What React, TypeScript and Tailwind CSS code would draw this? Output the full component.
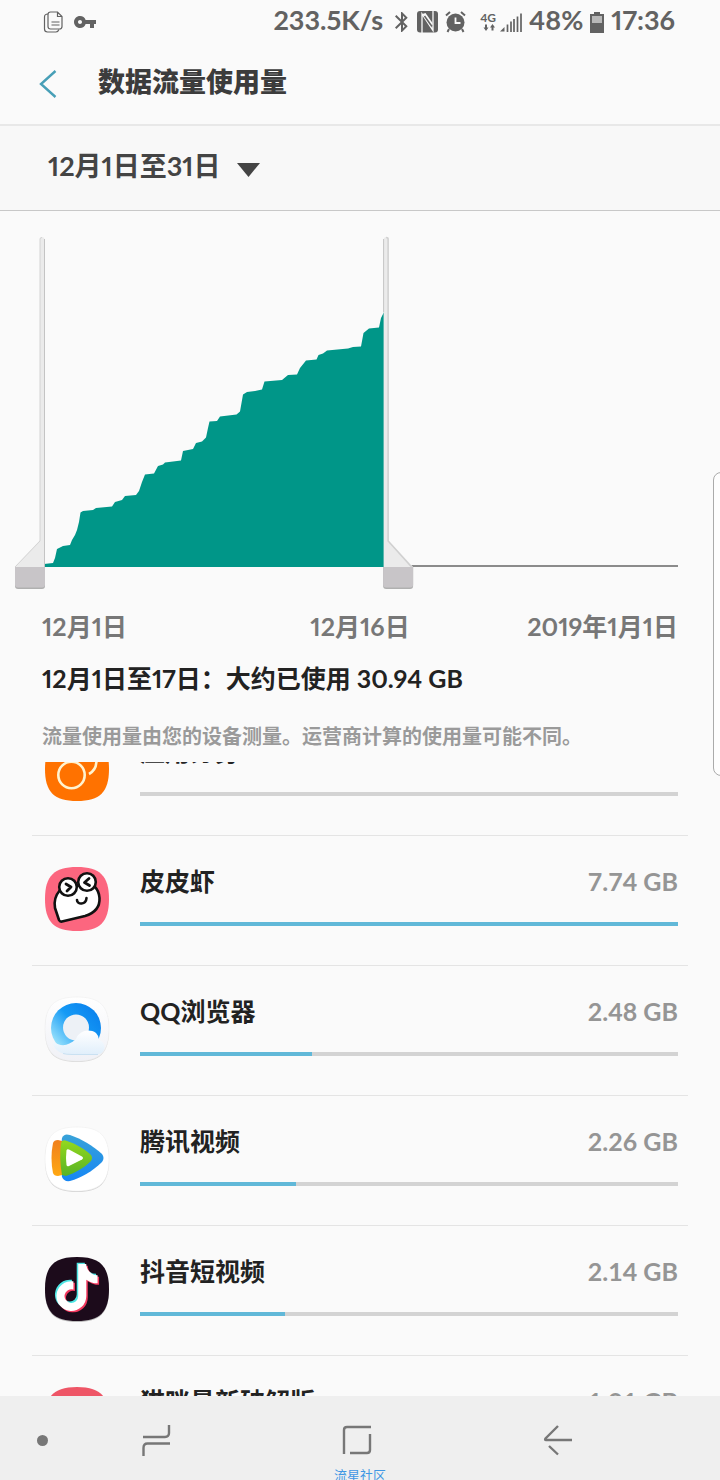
import { useState, type ReactNode } from 'react';
import { MdBluetooth, MdVpnKey } from 'react-icons/md';
import { FaTiktok } from 'react-icons/fa';

const usagePoints =
  '44,564 53,563 55,558 57,549 63,546 70,545 72,540 75,535 77,530 79,522 80.5,512.5 83,511 93,510 96,508 112,506.5 115,502 122,500 125,496 136,495 139,491 142,482 145,474.5 154,473.5 158,466 163,464.5 165,462.5 181,460.5 183,451 193,449 196,443 202,441.5 206,437.5 208,428 209.5,421.5 217,421 220,416.5 236.5,414.5 240,411.5 243,394.5 247,392 255,391 262,389.5 264.5,381.5 282,380 288,375 297,374.5 300,368 306,360.5 316.5,359.5 318.5,355 323,353.5 327,350.5 348,348.5 353,347 361,346.5 363.5,333 369,328.5 379,327.5 381,318 384,312';

const AXIS_START = 44;
const AXIS_END = 678;
const DAYS = 31;
const dayToX = (day: number) => AXIS_START + ((AXIS_END - AXIS_START) * day) / DAYS;

const thumb =
  'pointer-events-none absolute inset-x-7 bottom-2 h-7 appearance-none bg-transparent opacity-0 [&::-webkit-slider-thumb]:pointer-events-auto';

function UsageChart() {
  const [start, setStart] = useState(0);
  const [end, setEnd] = useState(16.63);
  const x1 = dayToX(start);
  const x2 = dayToX(end);
  return (
    <div className="relative">
      <svg viewBox="0 211 720 389" className="block w-full" role="img" aria-label="流量使用图表">
        <defs>
          <clipPath id="range">
            <rect x={x1} y="211" width={Math.max(0, x2 - x1)} height="389" />
          </clipPath>
        </defs>
        <path d="M44 566H678" stroke="#666" strokeWidth="1.6" />
        <polygon points={`44,567 ${usagePoints} 384,567`} fill="#009688" clipPath="url(#range)" />
        <g transform={`translate(${x1} 0)`}>
          <path d="M-4 540V239q0-2 2-2t2.5 2V567H-29Z" fill="#ebebeb" />
          <path d="M-29 567L-4 541V239q0-1.500 2-1.500" fill="none" stroke="#d4d4d4" />
          <path d="M.5 239V567" stroke="#c4c4c4" />
          <path d="M-29 567H1V586q0 3-3 3H-26q-3 0-3-3Z" fill="#b0b0b0" />
          <path d="M-29 567H1V584.500q0 3-3 3H-26q-3 0-3-3Z" fill="#c8c5c8" />
        </g>
        <g transform={`translate(${x2} 0)`}>
          <path d="M4 540V239q0-2-2-2t-2.500 2V567H29Z" fill="#ebebeb" />
          <path d="M27.500 567L4 541V239q0-1.500-2-1.500" fill="none" stroke="#d0d0d0" strokeWidth="1.500" />
          <path d="M-.5 239V312" stroke="#c4c4c4" />
          <path d="M-1 567H29V586q0 3-3 3H2q-3 0-3-3Z" fill="#b0b0b0" />
          <path d="M-1 567H29V584.500q0 3-3 3H2q-3 0-3-3Z" fill="#c8c5c8" />
        </g>
      </svg>
      <input
        type="range"
        aria-label="开始日期"
        min={0}
        max={DAYS}
        step={0.01}
        value={start}
        onChange={(e) => setStart(Math.min(Number(e.target.value), end))}
        className={thumb}
      />
      <input
        type="range"
        aria-label="结束日期"
        min={0}
        max={DAYS}
        step={0.01}
        value={end}
        onChange={(e) => setEnd(Math.max(Number(e.target.value), start))}
        className={thumb}
      />
    </div>
  );
}

const TILE = 'M32 0C55 0 64 9 64 32S55 64 32 64 0 55 0 32 9 0 32 0Z';

function Tile({ children }: { children: ReactNode }) {
  return (
    <svg viewBox="-2 -2 68 68" className="-mx-0.5 size-[68px] shrink-0" aria-hidden="true">
      {children}
    </svg>
  );
}

function CloneIcon() {
  return (
    <Tile>
      <path d={TILE} fill="#ff7200" />
      <g fill="none" stroke="#fff3cf" strokeWidth="2.600">
        <circle cx="26.500" cy="38" r="13.200" />
        <path d="M44 37C53 32 54 19 46 13" />
      </g>
    </Tile>
  );
}

function FrogIcon() {
  return (
    <Tile>
      <path d={TILE} fill="#fc667f" />
      <g stroke="#111" strokeWidth="2.600" strokeLinejoin="round" strokeLinecap="round">
        <path
          d="M15 23C10 29 9 36 10 41L14 53Q15 55 17 54.500L40 49C50 46 55 40 54.500 31Q54 24 50 20L34 18Z"
          fill="#fff"
        />
        <circle cx="23" cy="20" r="8.800" fill="#fff" />
        <circle cx="42" cy="15" r="8.800" fill="#fff" />
        <path d="M21 17L26 20L22 24M44 11.500L39.500 15.500L44.500 18.500" fill="none" strokeWidth="2.800" />
        <path d="M32 33C32 38 41 38 41.500 31" fill="none" />
      </g>
    </Tile>
  );
}

function QQBrowserIcon() {
  return (
    <Tile>
      <defs>
        <linearGradient id="qqRing" x1="1" y1="0.1" x2="0.1" y2="0.9">
          <stop offset="0" stopColor="#087dec" />
          <stop offset="0.5" stopColor="#159af5" />
          <stop offset="1" stopColor="#a6e9fc" />
        </linearGradient>
        <linearGradient id="qqCloud" x1="0" y1="0" x2="0" y2="1">
          <stop offset="0" stopColor="#fff" />
          <stop offset="1" stopColor="#e1effb" />
        </linearGradient>
        <linearGradient id="qqTile" x1="0" y1="0" x2="0" y2="1">
          <stop offset="0" stopColor="#fff" />
          <stop offset="1" stopColor="#f0f1f6" />
        </linearGradient>
      </defs>
      <path d={TILE} fill="#d9d9d9" transform="translate(0 1)" />
      <path d={TILE} fill="url(#qqTile)" stroke="#eee" strokeWidth="0.600" />
      <circle cx="31" cy="31" r="25" fill="url(#qqRing)" />
      <circle cx="31" cy="30.500" r="13" fill="#edf1f6" />
      <path
        d="M22 57C14 57 8 51 8 45C17 50 23 49 31 42C34 34 44 31 51 36Q54 39 54 43C62 45 61 57 53 57Z"
        fill="url(#qqCloud)"
      />
      <path d="M18 56.500Q21 57.500 27 57.500H53" fill="none" stroke="#bfdcf0" strokeWidth="0.800" />
    </Tile>
  );
}

function TencentVideoIcon() {
  return (
    <Tile>
      <defs>
        <linearGradient id="tvBlue" x1="0" y1="0" x2="0" y2="1">
          <stop offset="0" stopColor="#39a3d8" />
          <stop offset="1" stopColor="#1686f5" />
        </linearGradient>
        <linearGradient id="tvOrange" x1="0" y1="0" x2="0" y2="1">
          <stop offset="0" stopColor="#f0801e" />
          <stop offset="1" stopColor="#ffa812" />
        </linearGradient>
        <linearGradient id="tvGreen" x1="0" y1="0" x2="0" y2="1">
          <stop offset="0" stopColor="#94d81d" />
          <stop offset="1" stopColor="#58b326" />
        </linearGradient>
      </defs>
      <path d={TILE} fill="#d2d2d2" transform="translate(0 1)" />
      <path d={TILE} fill="#fff" stroke="#eee" strokeWidth="0.600" />
      <path
        d="M17 11Q19 6 25 8C37 12 48 19 57 27Q60 31 57 35C48 44 36 51 25 54Q19 55 17 50Q14 31 17 11Z"
        fill="url(#tvBlue)"
      />
      <path d="M8 16Q9 13 13 13L17 14V48L13 49Q9 49 8 46Q5 31 8 16Z" fill="url(#tvOrange)" />
      <path
        d="M16 16Q17 12 22 14C31 17 40 22 46 28Q48 31 46 34C39 41 30 46 21 49L17 48Q14 31 16 16Z"
        fill="url(#tvGreen)"
      />
      <path d="M21.500 23.500Q22 21.500 24 22.500L37 29.500Q39 31 37 32.500L24 39Q22 40 21.500 38Q20.500 31 21.500 23.500Z" fill="#fff" />
    </Tile>
  );
}

function DouyinIcon() {
  return (
    <Tile>
      <path d={TILE} fill="#bbb" transform="translate(0 1)" />
      <path d={TILE} fill="#1c0b1b" />
      <FaTiktok x={7} y={5.5} size={47} color="#4ee6e4" />
      <FaTiktok x={10} y={8.5} size={47} color="#f4395f" />
      <FaTiktok x={8.5} y={7} size={47} color="#fff" />
    </Tile>
  );
}

function RedIcon() {
  return (
    <Tile>
      <path d={TILE} fill="#ee5566" />
    </Tile>
  );
}

const apps = [
  { name: '应用分身', size: '', percent: 0, icon: <CloneIcon /> },
  { name: '皮皮虾', size: '7.74 GB', percent: 100, icon: <FrogIcon /> },
  { name: 'QQ浏览器', size: '2.48 GB', percent: 32, icon: <QQBrowserIcon /> },
  { name: '腾讯视频', size: '2.26 GB', percent: 29, icon: <TencentVideoIcon /> },
  { name: '抖音短视频', size: '2.14 GB', percent: 27, icon: <DouyinIcon /> },
  { name: '猫咪最新破解版', size: '1.91 GB', percent: 25, icon: <RedIcon /> },
];

function StatusBar() {
  return (
    <div className="flex h-10 shrink-0 items-center justify-between pr-[45px] pl-[43px] text-[27px] text-[#626262]">
      <div className="flex items-center gap-2.5 pt-1">
        <svg viewBox="0 0 20 22" className="h-[22px] w-5" fill="none" stroke="#626262" strokeWidth="1.200" aria-hidden="true">
          <path d="M7.500 1H14.500L19 5.500V15.500Q19 18 16.500 18H7.500Q5 18 5 15.500V3.500Q5 1 7.500 1ZM14.500 1V5.500H19M8.500 11H16.500M8.500 14H16.500" />
          <path d="M5 3Q1.500 3 1.500 6V18Q1.500 21 4.500 21H13Q15 21 16 18.500" />
        </svg>
        <MdVpnKey className="size-6" aria-hidden="true" />
      </div>
      <div className="flex items-center gap-[7px]">
        <span>233.5K/s</span>
        <MdBluetooth className="mt-1 -mr-1 size-6" aria-hidden="true" />
        <svg viewBox="0 0 21 22" className="mt-1 h-[22px] w-[21px]" aria-hidden="true">
          <rect width="21" height="21.500" rx="3" fill="#626262" />
          <path d="M5 22V3L16 19.500V0" fill="none" stroke="#fafafa" strokeWidth="1.300" />
          <path d="M5.500 3L15.500 18V12L8.500 2Z" fill="#fafafa" />
          <path d="M7.500 5L15 15.500" stroke="#626262" strokeWidth="1.500" />
        </svg>
        <svg viewBox="0 0 21 22" className="mt-1 h-[22px] w-[21px]" aria-hidden="true">
          <circle cx="10.500" cy="11.500" r="9" fill="#626262" />
          <path d="M1 4.500L5 1M20 4.500L16 1M4 18L2.500 21M17 18L18.500 21" stroke="#626262" strokeWidth="2" />
          <path d="M10.500 6.500V12H15.500" fill="none" stroke="#fafafa" strokeWidth="1.800" />
        </svg>
        <div className="mt-1 ml-[7px] flex items-end gap-1">
          <div className="flex flex-col items-center">
            <span className="text-[12px] leading-3">4G</span>
            <svg viewBox="0 0 13 8" className="h-2 w-[13px]" fill="#626262" aria-hidden="true">
              <path d="M3 0.500H5V3.500H6.500L4 7L1.500 3.500H3ZM9.500 6.500H11.500V3.500H13L10.500 0L8 3.500H9.500Z" />
            </svg>
          </div>
          <svg viewBox="0 0 22 20" className="h-5 w-[22px]" stroke="#626262" strokeWidth="1.700" aria-hidden="true">
            <path d="M0 19.500L4.500 15V19.500Z" fill="#626262" stroke="none" />
            <path d="M7.500 20V12.500M11 20V9.500M14 20V7M17.500 20V4.500M21 20V1.500" />
          </svg>
        </div>
        <span>48%</span>
        <svg viewBox="0 0 14 22" className="mt-1 h-[22px] w-[14px]" aria-hidden="true">
          <path d="M4 1H10V3H14V22H0V3H4Z" fill="#626262" />
          <path d="M2 5H12V12H2Z" fill="#b8b8b8" />
        </svg>
        <span>17:36</span>
      </div>
    </div>
  );
}

const navButton = 'flex items-center justify-center';

export default function App() {
  return (
    <div className="relative flex h-screen flex-col overflow-hidden bg-[#fafafa] font-['Lato','Noto_Sans_CJK_SC',sans-serif] font-bold proportional-nums">
      <StatusBar />
      <header className="flex h-[86px] shrink-0 items-center gap-10 border-b-2 border-[#e8e8e8] pl-[38px]">
        <button type="button" aria-label="返回" className="pt-1">
          <svg viewBox="0 0 20 30" className="h-[30px] w-5" fill="none" stroke="#479fb7" strokeWidth="2.400" aria-hidden="true">
            <path d="M17.500 2L3 15L17.500 28" />
          </svg>
        </button>
        <h1 className="text-[27px] leading-9 font-black text-[#3c3c3c]">数据流量使用量</h1>
      </header>
      <div className="flex h-[85px] shrink-0 items-center border-b border-[#c8c8c8] bg-[#f8f8f8] pb-1 pl-12">
        <button type="button" aria-haspopup="listbox" className="flex items-center gap-4 text-[27px] leading-9 text-[#444]">
          12月1日至31日
          <svg viewBox="0 0 24 14" className="mt-2 h-[14px] w-6" fill="#444" aria-hidden="true">
            <path d="M0 0H23L11.500 14Z" />
          </svg>
        </button>
      </div>

      <main className="flex min-h-0 flex-1 flex-col">
        <section className="shrink-0">
          <UsageChart />
          <div className="grid grid-cols-3 px-[42px] pt-2 text-[25px] leading-9 text-[#777]">
            <span>12月1日</span>
            <span className="text-center">12月16日</span>
            <span className="text-right">2019年1月1日</span>
          </div>
          <p className="px-[42px] pt-4 text-[25px] leading-9 text-[#222]">12月1日至17日：大约已使用 30.94 GB</p>
          <p className="px-[42px] pt-6 pb-2.5 text-[20px] leading-8 font-bold text-[#9a9a9a]">
            流量使用量由您的设备测量。运营商计算的使用量可能不同。
          </p>
        </section>
        <div className="min-h-0 flex-1 overflow-hidden">
          <ul className="-mt-14">
            {apps.map((app) => (
              <li key={app.name} className="mx-8 flex h-[130px] gap-[31px] border-b border-[#e4e4e4] pt-[29px] pr-2.5 pl-[13px]">
                {app.icon}
                <div className="min-w-0 flex-1">
                  <div className="flex justify-between text-[25px] leading-8">
                    <span className="text-[#222]">{app.name}</span>
                    <span className="text-[#959595] tabular-nums">{app.size}</span>
                  </div>
                  <div className="mt-[25px] h-1 bg-[#d3d3d3]">
                    <div className="h-full bg-[#61b8d8]" style={{ width: `${app.percent}%` }} />
                  </div>
                </div>
              </li>
            ))}
          </ul>
        </div>
      </main>

      <div className="absolute top-[472px] -right-1 h-[304px] w-[11px] rounded-l-lg border border-[#aaa] bg-[#fdfdfd]" />

      <nav className="relative flex h-[84px] shrink-0 bg-[#efefef] pr-[62px]">
        <button type="button" aria-label="固定导航栏" className="flex w-14 items-center justify-end pt-1 pr-2">
          <span className="size-[11px] rounded-full bg-[#777]" />
        </button>
        <div className="grid flex-1 grid-cols-3 pt-1">
          <button type="button" aria-label="最近任务" className={navButton}>
            <svg viewBox="0 0 30 32" className="h-8 w-[30px]" fill="none" stroke="#777" strokeWidth="2.400" aria-hidden="true">
              <path d="M28 1V9Q28 13 24 13H2M2.500 32V24Q2.500 19.500 6.500 19.500H29" />
            </svg>
          </button>
          <button type="button" aria-label="主屏幕" className={navButton}>
            <svg viewBox="0 0 30 32" className="h-8 w-[30px]" fill="none" stroke="#777" strokeWidth="2.400" aria-hidden="true">
              <path d="M2 30V6Q2 3 5 3H29M28 10V26Q28 29 25 29H8" />
            </svg>
          </button>
          <button type="button" aria-label="返回上一页" className={navButton}>
            <svg viewBox="0 0 30 32" className="h-8 w-[30px]" fill="none" stroke="#777" strokeWidth="2.400" aria-hidden="true">
              <path d="M29 16H3Q1.500 16 2.500 14.500L15 2M6 22L15 30.500" />
            </svg>
          </button>
        </div>
        <span className="absolute inset-x-0 -bottom-1 text-center text-[13px] leading-[18px] font-normal text-[#3f97e4]">流星社区</span>
      </nav>
    </div>
  );
}
